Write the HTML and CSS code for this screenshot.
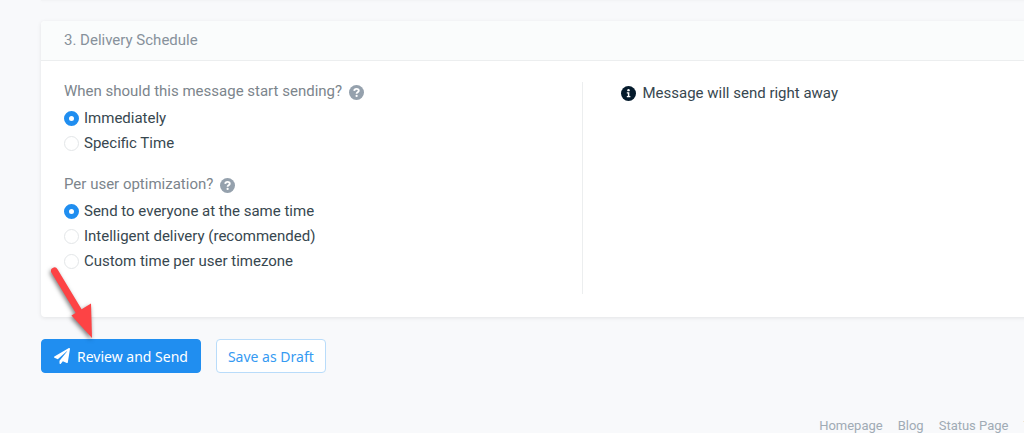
FILE: index.html
```html
<!DOCTYPE html>
<html lang="en">
<head>
    <meta charset="UTF-8">
    <meta name="viewport" content="width=device-width, initial-scale=1.0">
    <title>Delivery Schedule</title>
    <link rel="stylesheet" href="styles.css">
</head>
<body>
    <main class="page">
        <div class="card-edge"></div>
        <section class="card">
            <h2 class="card-header">3. Delivery Schedule</h2>
            <div class="card-body">
                <div class="options">
                    <fieldset class="group">
                        <legend class="question">When should this message start sending?
                            <svg class="icon help" viewBox="0 0 16 16" aria-hidden="true">
                                <circle cx="8" cy="8" r="8" fill="#95a1ad"/>
                                <path d="M5.6 6.2C5.7 4.8 6.7 4.1 8 4.1c1.4 0 2.4.8 2.4 2 0 1.7-2.3 1.7-2.3 3.2" fill="none" stroke="#fff" stroke-width="2"/>
                                <circle cx="8.1" cy="11.7" r="1.2" fill="#fff"/>
                            </svg>
                        </legend>
                        <label class="option"><input type="radio" name="start" checked>Immediately</label>
                        <label class="option"><input type="radio" name="start">Specific Time</label>
                    </fieldset>
                    <fieldset class="group">
                        <legend class="question">Per user optimization?
                            <svg class="icon help" viewBox="0 0 16 16" aria-hidden="true">
                                <circle cx="8" cy="8" r="8" fill="#95a1ad"/>
                                <path d="M5.6 6.2C5.7 4.8 6.7 4.1 8 4.1c1.4 0 2.4.8 2.4 2 0 1.7-2.3 1.7-2.3 3.2" fill="none" stroke="#fff" stroke-width="2"/>
                                <circle cx="8.1" cy="11.7" r="1.2" fill="#fff"/>
                            </svg>
                        </legend>
                        <label class="option"><input type="radio" name="optimize" checked>Send to everyone at the same time</label>
                        <label class="option"><input type="radio" name="optimize">Intelligent delivery (recommended)</label>
                        <label class="option"><input type="radio" name="optimize">Custom time per user timezone</label>
                    </fieldset>
                </div>
                <p class="summary">
                    <svg class="icon" viewBox="0 0 16 16" aria-hidden="true">
                        <circle cx="8" cy="8" r="8" fill="#051b2c"/>
                        <circle cx="8" cy="4.4" r="1.3" fill="#fff"/>
                        <path d="M6.2 6.6h2.700v4.100h1.100v1.400H6.200v-1.400h1.100V8H6.200z" fill="#fff"/>
                    </svg>
                    Message will send right away
                </p>
            </div>
        </section>

        <div class="actions">
            <button class="button primary" type="button">
                <svg class="plane" viewBox="0 0 512 512" aria-hidden="true">
                    <path fill="#fff" d="M476 3L12 271c-18 10-16 36 2 43l107 45L409 105c5-5 13 2 8 8L176 407v81c0 24 29 33 43 16l64-78 125 53c14 6 31-3 33-19L511 28c4-20-17-34-35-25z"/>
                </svg>
                Review and Send
            </button>
            <button class="button" type="button">Save as Draft</button>
        </div>
    </main>

    <footer class="footer">
        <a href="#">Homepage</a>
        <a href="#">Blog</a>
        <a href="#">Status Page</a>
        <a href="#">Terms</a>
    </footer>

    <!-- Pointer to the send button -->
    <svg class="arrow" viewBox="0 0 60 84" aria-hidden="true">
        <path d="M9.5 13L36 57" stroke="#fd4345" stroke-width="7" stroke-linecap="round"/>
        <path d="M26.500 57.500L46 45.500L47 80z" fill="#fd4345"/>
    </svg>
</body>
</html>
```

FILE: styles.css
```css
* {
    box-sizing: border-box;
}
body {
    margin: 0;
    background-color: #f8f9fb;
    color: #37474f;
    font-family: Roboto, "Liberation Sans", sans-serif;
    font-size: 15px;
    overflow: hidden;
    position: relative;
}
/* the form is wider than the window and runs off the right side */
.page {
    margin: 0 -100px 0 41px;
}
.card-edge {
    height: 1px;
    margin-bottom: 20px;
    background-color: #f3f4f6;
    box-shadow: 0 0 3px rgba(0, 0, 0, 0.05);
}
.card {
    background-color: white;
    border-radius: 4px;
    box-shadow: 0 1px 4px rgba(0, 0, 0, 0.09);
}
.card-header {
    margin: 0;
    padding: 0 23px;
    border-bottom: 1px solid #eceeef;
    border-radius: 4px 4px 0 0;
    background-color: #fafcfc;
    color: #87919b;
    font-size: 15px;
    font-weight: normal;
    line-height: 39px;
}
.card-body {
    display: grid;
    grid-template-columns: 1fr 1fr;
    padding: 21px 23px 23px;
}
.options {
    padding-bottom: 20px;
    border-right: 1px solid #eceeef;
}
.group {
    margin: 0;
    padding: 0;
    border: 0;
}
.group + .group {
    margin-top: 19px;
}
.question {
    display: flex;
    align-items: center;
    gap: 7px;
    padding: 0;
    margin-bottom: 6px;
    color: #7c858c;
    line-height: 18px;
}
.icon {
    width: 15px;
    height: 15px;
    flex: none;
}
.help {
    margin-top: 2px;
}
.option {
    display: flex;
    align-items: center;
    gap: 5px;
    line-height: 25px;
}
.option input {
    appearance: none;
    width: 15px;
    height: 15px;
    margin: 0;
    border: 1px solid #e3e6e8;
    border-radius: 50%;
    background-color: white;
}
.option input:checked {
    border: 5px solid #208ef0;
}
.summary {
    display: flex;
    align-items: center;
    align-self: start;
    gap: 7px;
    margin: 0;
    padding-left: 38px;
    line-height: 23px;
}
.actions {
    display: flex;
    gap: 15px;
    margin-top: 22px;
}
.button {
    display: flex;
    align-items: center;
    gap: 7px;
    height: 34px;
    padding: 0 11px;
    border: 1px solid #b9dcfa;
    border-radius: 4px;
    background-color: white;
    color: #359af2;
    font-family: "Noto Sans", sans-serif;
    font-size: 14px;
}
.primary {
    padding: 0 12px;
    border-color: #208ef0;
    background-color: #208ef0;
    color: white;
}
.plane {
    width: 16px;
    height: 16px;
}
.footer {
    display: flex;
    justify-content: flex-end;
    gap: 15px;
    margin: 44px -36px 0 0;
    font-size: 13px;
    line-height: 18px;
}
.footer a {
    color: #a0abb5;
    text-decoration: none;
}
.arrow {
    position: absolute;
    left: 45px;
    top: 258px;
    width: 60px;
    height: 84px;
    fill: none;
    filter: drop-shadow(-1px 2px 2px rgba(0, 0, 0, 0.5));
}
```
